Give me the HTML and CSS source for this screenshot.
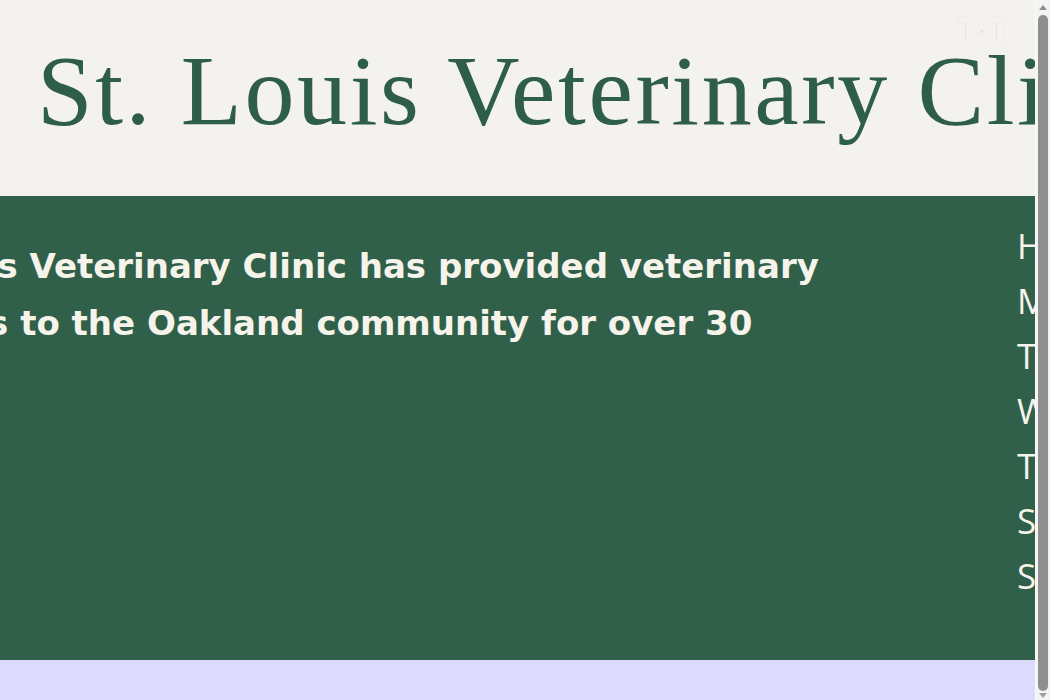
FILE: index.html
```html
<!DOCTYPE html>
<html lang="en">
<head>
<meta charset="utf-8">
<title>St. Louis Veterinary Clinic</title>
<link rel="stylesheet" href="styles.css">
</head>
<body>
<header class="site-header">
  <h1 class="site-title">St. Louis Veterinary Clinic</h1>
  <button class="menu-toggle" aria-label="Menu"><span class="bar"></span><span class="dot"></span><span class="bar"></span></button>
</header>
<main class="hero">
  <div class="intro">
    <p class="intro-text">St. Louis Veterinary Clinic has provided veterinary services to the Oakland community for over 30 years.</p>
  </div>
  <ul class="hours">
    <li>Hours</li>
    <li>Monday</li>
    <li>Tuesday</li>
    <li>Wednesday</li>
    <li>Thursday</li>
    <li>Saturday</li>
    <li>Sunday</li>
  </ul>
</main>
<footer class="site-footer"></footer>
<div class="scrollbar" aria-hidden="true">
  <span class="arrow-up"></span>
  <span class="thumb"></span>
  <span class="arrow-down"></span>
</div>
</body>
</html>
```
FILE: styles.css
```css
html, body {
  margin: 0;
  padding: 0;
  overflow-x: hidden;
}
body {
  background: #dcdbfe;
  font-family: "Open Sans", "Liberation Sans", sans-serif;
}
.site-header {
  position: relative;
  background: #f3f2ee;
  padding: 41px 0 55px 37px;
  white-space: nowrap;
}
.site-title {
  margin: 0;
  font-family: "Liberation Serif", "DejaVu Serif", serif;
  font-weight: 400;
  font-size: 100px;
  line-height: 100px;
  color: #2e5e49;
  letter-spacing: 2.6px;
}
.menu-toggle {
  position: absolute;
  top: 16px;
  left: 958px;
  width: 46px;
  height: 30px;
  background: transparent;
  border: 1px solid #efeee8;
  display: flex;
  align-items: center;
  justify-content: space-between;
  padding: 0 6px;
}
.menu-toggle .bar {
  width: 1px;
  height: 18px;
  background: #e6e5dd;
}
.menu-toggle .dot {
  width: 3px;
  height: 3px;
  background: #e8e7df;
}
.hero {
  display: flex;
  background: #305f4a;
  height: 464px;
  box-sizing: border-box;
  padding-top: 22px;
  color: #f6f4ea;
}
.intro {
  flex: none;
  width: 990px;
  margin-left: -149px;
  padding-top: 20px;
}
.intro-text {
  margin: 0;
  font-family: "DejaVu Sans", "Liberation Sans", sans-serif;
  font-weight: 700;
  font-size: 34px;
  line-height: 57px;
}
.hours {
  flex: none;
  list-style: none;
  margin: 0 0 0 176px;
  padding: 0;
  font-size: 35px;
  line-height: 55px;
  white-space: nowrap;
}
.site-footer {
  height: 52px;
  background: #dcdbfe;
}
.scrollbar {
  position: fixed;
  top: 0;
  right: 0;
  width: 15px;
  height: 100vh;
  background: #f4f4f2;
  border-left: 1px solid #fafafa;
  box-sizing: border-box;
}
.scrollbar .thumb {
  position: absolute;
  top: 15px;
  bottom: 9px;
  left: 2px;
  width: 10px;
  border-radius: 5px;
  background: #8f8f8f;
}
.scrollbar .arrow-up,
.scrollbar .arrow-down {
  position: absolute;
  left: 3px;
  width: 0;
  height: 0;
  border-left: 4px solid transparent;
  border-right: 4px solid transparent;
}
.scrollbar .arrow-up {
  top: 5px;
  border-bottom: 5px solid #8f8f8f;
}
.scrollbar .arrow-down {
  bottom: 2px;
  border-top: 5px solid #a0a0a0;
}
```
